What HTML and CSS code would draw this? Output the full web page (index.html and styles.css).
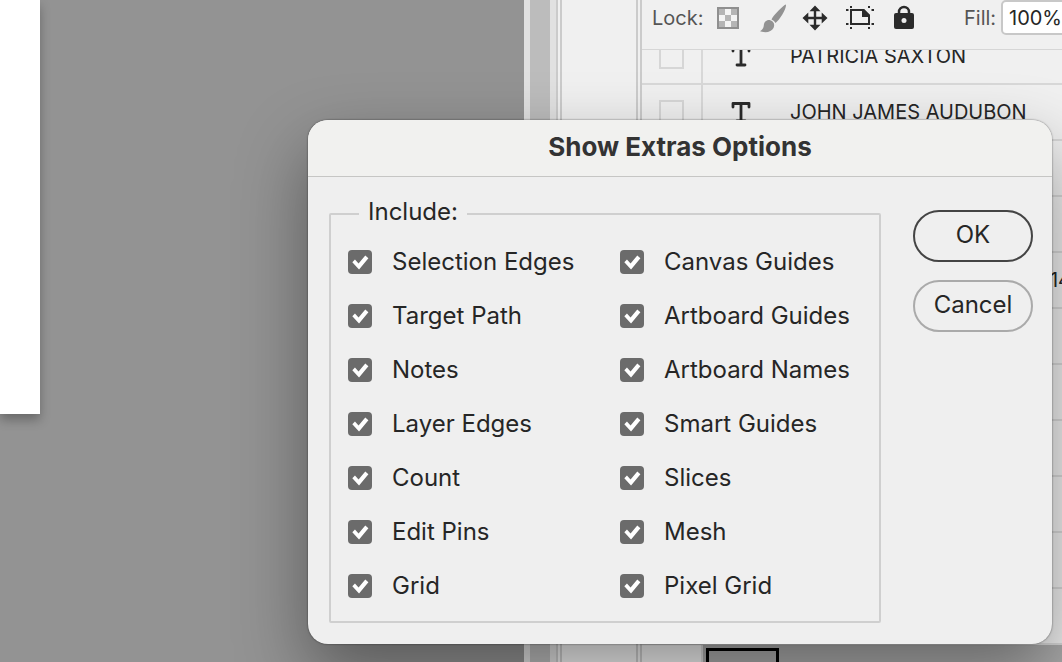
FILE: index.html
```html
<!DOCTYPE html>
<html lang="en">
<head>
<meta charset="utf-8">
<title>Show Extras Options</title>
<link rel="stylesheet" href="styles.css">
</head>
<body>
<svg width="0" height="0" class="defs" aria-hidden="true">
  <symbol id="type" viewBox="0 0 20 22">
    <path d="M2 6V2.500H18V6M10 2.500V20M6 20H14" fill="none" stroke="#2b2b2b" stroke-width="2.800" stroke-linejoin="round" stroke-linecap="round"/>
  </symbol>
</svg>
<div class="app">
  <main class="canvas"><div class="page"></div></main>
  <div class="scroll"></div>
  <div class="dock"></div>
  <section class="panel">
    <div class="toolbar">
      <span class="lock-label">Lock:</span>
      <button class="tool" aria-label="Lock transparent pixels">
        <svg width="28" height="34" viewBox="0 0 28 34"><path fill="#f4f4f4" d="M4 8h20v20H4z"/><path fill="#b5b5b5" d="M5 9h6v6H5zM17 9h6v6h-6zM11 15h6v6h-6zM5 21h6v6H5zM17 21h6v6h-6z"/><path d="M4 8h20v20H4z" fill="none" stroke="#8f8f8f" stroke-width="2"/></svg>
      </button>
      <button class="tool" aria-label="Lock image pixels">
        <svg width="28" height="34" viewBox="-1.500 -2 28 34" overflow="visible"><path fill="#929292" d="M26.500 2.500C24 3 13.500 13.500 12 17.500Q15 18.500 16 21C20 18 27 7 26.500 2.500ZM10.800 18.200C7 17.500 4.500 20 4.300 23.500C4 26.500 2.500 28 .5 29.300C6.500 31.200 12 30 14 26C15.500 22.500 14.500 19.500 10.800 18.200Z"/></svg>
      </button>
      <button class="tool" aria-label="Lock position">
        <svg width="28" height="34" viewBox="0 0 28 34"><path fill="#2b2b2b" d="M13 5.500l5.500 5.800h-4.300v5.500h5.500v-4.300l5.800 5.500-5.800 5.500v-4.300h-5.500v5.500h4.300L13 30.500l-5.500-5.800h4.300v-5.500H6.300v4.300L.5 18l5.800-5.500v4.300h5.500v-5.500H7.500z"/></svg>
      </button>
      <button class="tool" aria-label="Lock artboard nesting">
        <svg width="28" height="34" viewBox="0 0 28 34"><path d="M5 10H17.500L23 15.500V24H5Z" fill="none" stroke="#2b2b2b" stroke-width="2"/><path fill="#2b2b2b" d="M16 9h2l6 6v2h-8zM4 6h2v2h-2zM22 6h2v2h-2zM0 9h2.500v2H0zM25.500 9h2.500v2h-2.500zM0 23h2.500v2H0zM25.500 23h2.500v2h-2.500zM4 27h2v2h-2zM22 27h2v2h-2z"/></svg>
      </button>
      <button class="tool" aria-label="Lock all">
        <svg width="28" height="34" viewBox="0 0 28 34"><path d="M9 14V12a5 5 0 0 1 10 0V14" fill="none" stroke="#2b2b2b" stroke-width="2.500"/><rect x="4" y="13" width="20" height="16" rx="2" fill="#2b2b2b"/><circle cx="14" cy="20.500" r="2.500" fill="#eee"/></svg>
      </button>
      <label class="fill-label" for="fill">Fill:</label>
      <input class="fill-input" id="fill" value="100%">
    </div>
    <div class="layers">
      <div class="list">
        <div class="row"><div class="eye"><i class="box"></i></div><svg class="type" width="20" height="22"><use href="#type"/></svg><span class="name">PATRICIA SAXTON</span></div>
        <div class="row"><div class="eye"><i class="box"></i></div><svg class="type" width="20" height="22"><use href="#type"/></svg><span class="name">JOHN JAMES AUDUBON</span></div>
        <div class="row"><div class="eye"></div></div>
        <div class="row"><div class="eye"></div></div>
        <div class="row"><div class="eye"></div><span class="tail">14</span></div>
        <div class="row"><div class="eye"></div></div>
        <div class="row"><div class="eye"></div></div>
        <div class="row"><div class="eye"></div></div>
        <div class="row"><div class="eye"></div></div>
        <div class="row"><div class="eye"></div></div>
        <div class="row"><div class="eye"></div></div>
        <div class="row selected"><div class="eye"></div><div class="thumb"></div></div>
      </div>
    </div>
  </section>
</div>

<div class="dialog" role="dialog" aria-labelledby="title">
  <h1 class="title" id="title">Show Extras Options</h1>
  <form class="body">
    <fieldset class="include">
      <legend class="legend">Include:</legend>
      <div class="options">
        <label class="option"><input class="check" type="checkbox" checked>Selection Edges</label>
        <label class="option"><input class="check" type="checkbox" checked>Target Path</label>
        <label class="option"><input class="check" type="checkbox" checked>Notes</label>
        <label class="option"><input class="check" type="checkbox" checked>Layer Edges</label>
        <label class="option"><input class="check" type="checkbox" checked>Count</label>
        <label class="option"><input class="check" type="checkbox" checked>Edit Pins</label>
        <label class="option"><input class="check" type="checkbox" checked>Grid</label>
        <label class="option"><input class="check" type="checkbox" checked>Canvas Guides</label>
        <label class="option"><input class="check" type="checkbox" checked>Artboard Guides</label>
        <label class="option"><input class="check" type="checkbox" checked>Artboard Names</label>
        <label class="option"><input class="check" type="checkbox" checked>Smart Guides</label>
        <label class="option"><input class="check" type="checkbox" checked>Slices</label>
        <label class="option"><input class="check" type="checkbox" checked>Mesh</label>
        <label class="option"><input class="check" type="checkbox" checked>Pixel Grid</label>
      </div>
    </fieldset>
    <div class="actions">
      <button class="btn primary" type="button">OK</button>
      <button class="btn" type="button">Cancel</button>
    </div>
  </form>
</div>
</body>
</html>
```
FILE: styles.css
```css
* { box-sizing: border-box; }

body {
  margin: 0;
  overflow: hidden;
  font-family: Inter, "Liberation Sans", sans-serif;
  color: #262626;
}

.defs { position: absolute; }

.app { display: flex; height: 100vh; }

.canvas { flex: 1; background: #939393; }

.page {
  width: 40px;
  height: 414px;
  background: #fff;
  box-shadow: 0 6px 10px rgba(0, 0, 0, 0.28);
}

.scroll {
  width: 32px;
  background: #bcbcbc;
  border: solid #e1e1e1;
  border-width: 0 6px;
}

.dock {
  width: 86px;
  background: #f0f0f0;
  border: double #cbcbcb;
  border-width: 0 6px;
}

.panel {
  display: flex;
  flex-direction: column;
  width: 420px;
  background: #f0f0f0;
}

.toolbar {
  display: flex;
  align-items: flex-start;
  height: 50px;
  padding-left: 10px;
  border-bottom: 1px solid #d6d6d6;
  font-size: 20px;
  line-height: 36px;
}

.lock-label { width: 62px; color: #555; }

.tool {
  flex: none;
  width: 28px;
  height: 34px;
  margin-right: 16px;
  padding: 0;
  border: 0;
  background: none;
}

.tool svg { display: block; }

.fill-label { margin-left: 30px; color: #555; }

.fill-input {
  flex: none;
  width: 91px;
  height: 35px;
  margin-left: auto;
  margin-right: -30px;
  padding: 0 6px;
  border: 2px solid #c8c8c8;
  border-radius: 5px;
  background: #fff;
  color: #262626;
  font: inherit;
}

.layers { flex: 1; min-height: 0; overflow: hidden; }

.list { margin-top: -21px; }

.row {
  display: flex;
  align-items: center;
  height: 56px;
  border-bottom: 2px solid #d8d8d8;
  font-size: 20px;
}

.eye {
  display: flex;
  align-items: center;
  align-self: stretch;
  width: 61px;
  padding-left: 17px;
  background: #f0f0f0;
  border-right: 2px solid #d8d8d8;
}

.box { width: 25px; height: 25px; border: 2px solid #d6d6d6; }

.type { margin: 0 39px 0 28px; }

.tail { margin-left: auto; margin-right: -9px; }

.selected { align-items: flex-start; background: #aaa; }

.thumb { width: 73px; height: 50px; margin: 3px; border: 3px solid #000; }

.dialog {
  position: absolute;
  top: 120px;
  right: 10px;
  width: 744px;
  border-radius: 20px;
  background: #efefef;
  box-shadow: 0 0 2px rgba(0, 0, 0, 0.6), 0 30px 70px rgba(0, 0, 0, 0.4);
}

.title {
  margin: 0;
  padding: 11px 0 13px;
  border-bottom: 1px solid #c6c6c4;
  border-radius: 20px 20px 0 0;
  background: #f1f1ef;
  font-size: 26px;
  font-weight: 700;
  line-height: 32px;
  text-align: center;
  color: #333;
}

.body {
  display: flex;
  gap: 32px;
  padding: 20px 19px 21px 21px;
  font-size: 24px;
  line-height: 30px;
}

.include {
  flex: 1;
  margin: 0;
  padding: 4px 17px 8px;
  border: 2px solid #cfcfcf;
  border-radius: 2px;
}

.legend { margin-left: 11px; padding: 0 9px 4px; }

.options {
  display: grid;
  grid-template-rows: repeat(7, 54px);
  grid-auto-flow: column;
  grid-template-columns: 272px auto;
}

.option { display: flex; align-items: center; gap: 20px; }

.check {
  appearance: none;
  width: 24px;
  height: 24px;
  margin: 0;
  border-radius: 4px;
  background: #6b6b6b;
}

.check:checked::before {
  content: "";
  display: block;
  height: 24px;
  background: #fff;
  clip-path: polygon(18% 51%, 29% 40%, 44% 56%, 72% 23%, 85% 34%, 46% 81%);
}

.actions {
  display: flex;
  flex-direction: column;
  gap: 18px;
  width: 120px;
  padding-top: 13px;
}

.btn {
  height: 52px;
  padding: 0 0 2px;
  border: 2px solid #aaa;
  border-radius: 26px;
  background: none;
  color: #262626;
  font: inherit;
}

.primary { border-color: #444; }
```
